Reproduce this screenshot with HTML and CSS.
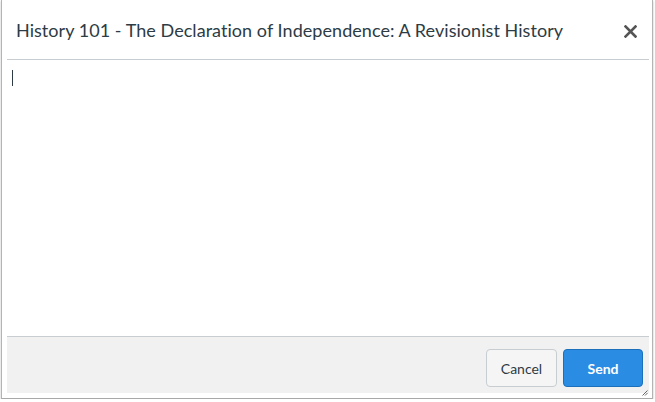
FILE: index.html
```html
<!DOCTYPE html>
<html>
<head>
<meta charset="utf-8">
<link rel="stylesheet" href="styles.css">
</head>
<body>
<div class="window">
  <div class="header">
    <h1 class="title">History 101 - The Declaration of Independence: A Revisionist History</h1>
    <button class="close" aria-label="Close">
      <svg width="13" height="13" viewBox="0 0 13 13"><path d="M1.5 1.5 L11.5 11.5 M11.5 1.5 L1.5 11.5" stroke="#555" stroke-width="2.6" stroke-linecap="square"/></svg>
    </button>
  </div>
  <div class="editor"><span class="caret"></span></div>
  <div class="footer">
    <button class="btn btn-cancel">Cancel</button>
    <button class="btn btn-send">Send</button>
  </div>
  <svg class="grip" width="6" height="6" viewBox="0 0 6 6"><path d="M0.5 5.5 L5.5 0.5 M3 5.5 L5.5 3" stroke="#555" stroke-width="0.9"/></svg>
</div>
</body>
</html>
```
FILE: styles.css
```css
html, body {
  margin: 0;
  padding: 0;
  background: #ffffff;
}
body {
  font-family: Lato, "Open Sans", sans-serif;
  color: #2d3b45;
}
.window {
  position: relative;
  box-sizing: border-box;
  width: 652px;
  height: 399px;
  margin-left: 1px;
  border-left: 1px solid #b4b4b4;
  border-right: 1px solid #b4b4b4;
  border-bottom: 1px solid #a8a8a8;
  box-shadow: 0 1px 2px rgba(0,0,0,0.25);
  padding: 0 3px 5px 5px;
  display: flex;
  flex-direction: column;
  background: #fff;
}
.header {
  height: 59px;
  border-bottom: 1px solid #c7cdd1;
  display: flex;
  align-items: center;
  padding: 0 0 0 9px;
}
.title {
  flex: 1;
  margin: 0;
  font-size: 18px;
  font-weight: 400;
  color: #2d3b45;
  letter-spacing: 0.05px;
  padding-top: 1px;
}
.close {
  border: 0;
  background: none;
  padding: 0;
  width: 13px;
  height: 13px;
  margin-right: 12px;
  margin-top: 3px;
  display: flex;
}
.editor {
  flex: 1;
  padding: 10px 5px;
}
.caret {
  display: block;
  width: 1px;
  height: 16px;
  background: #2d3b45;
}
.footer {
  height: 57px;
  box-sizing: border-box;
  border-top: 1px solid #c7cdd1;
  background: #f1f1f1;
  display: flex;
  justify-content: flex-end;
  align-items: flex-start;
  gap: 6px;
  padding: 12px 6px 0 0;
}
.btn {
  height: 38px;
  box-sizing: border-box;
  border-radius: 4px;
  font-family: Lato, "Open Sans", sans-serif;
  font-size: 14px;
  padding: 0;
}
.btn-cancel {
  width: 71px;
  background: #f5f5f5;
  border: 1px solid #c7cdd1;
  color: #2d3b45;
}
.btn-send {
  width: 80px;
  background: #2b8ce4;
  border: 1px solid #1c6fba;
  color: #fff;
  font-weight: 700;
}
.grip {
  position: absolute;
  right: 4px;
  bottom: 2px;
}
```
